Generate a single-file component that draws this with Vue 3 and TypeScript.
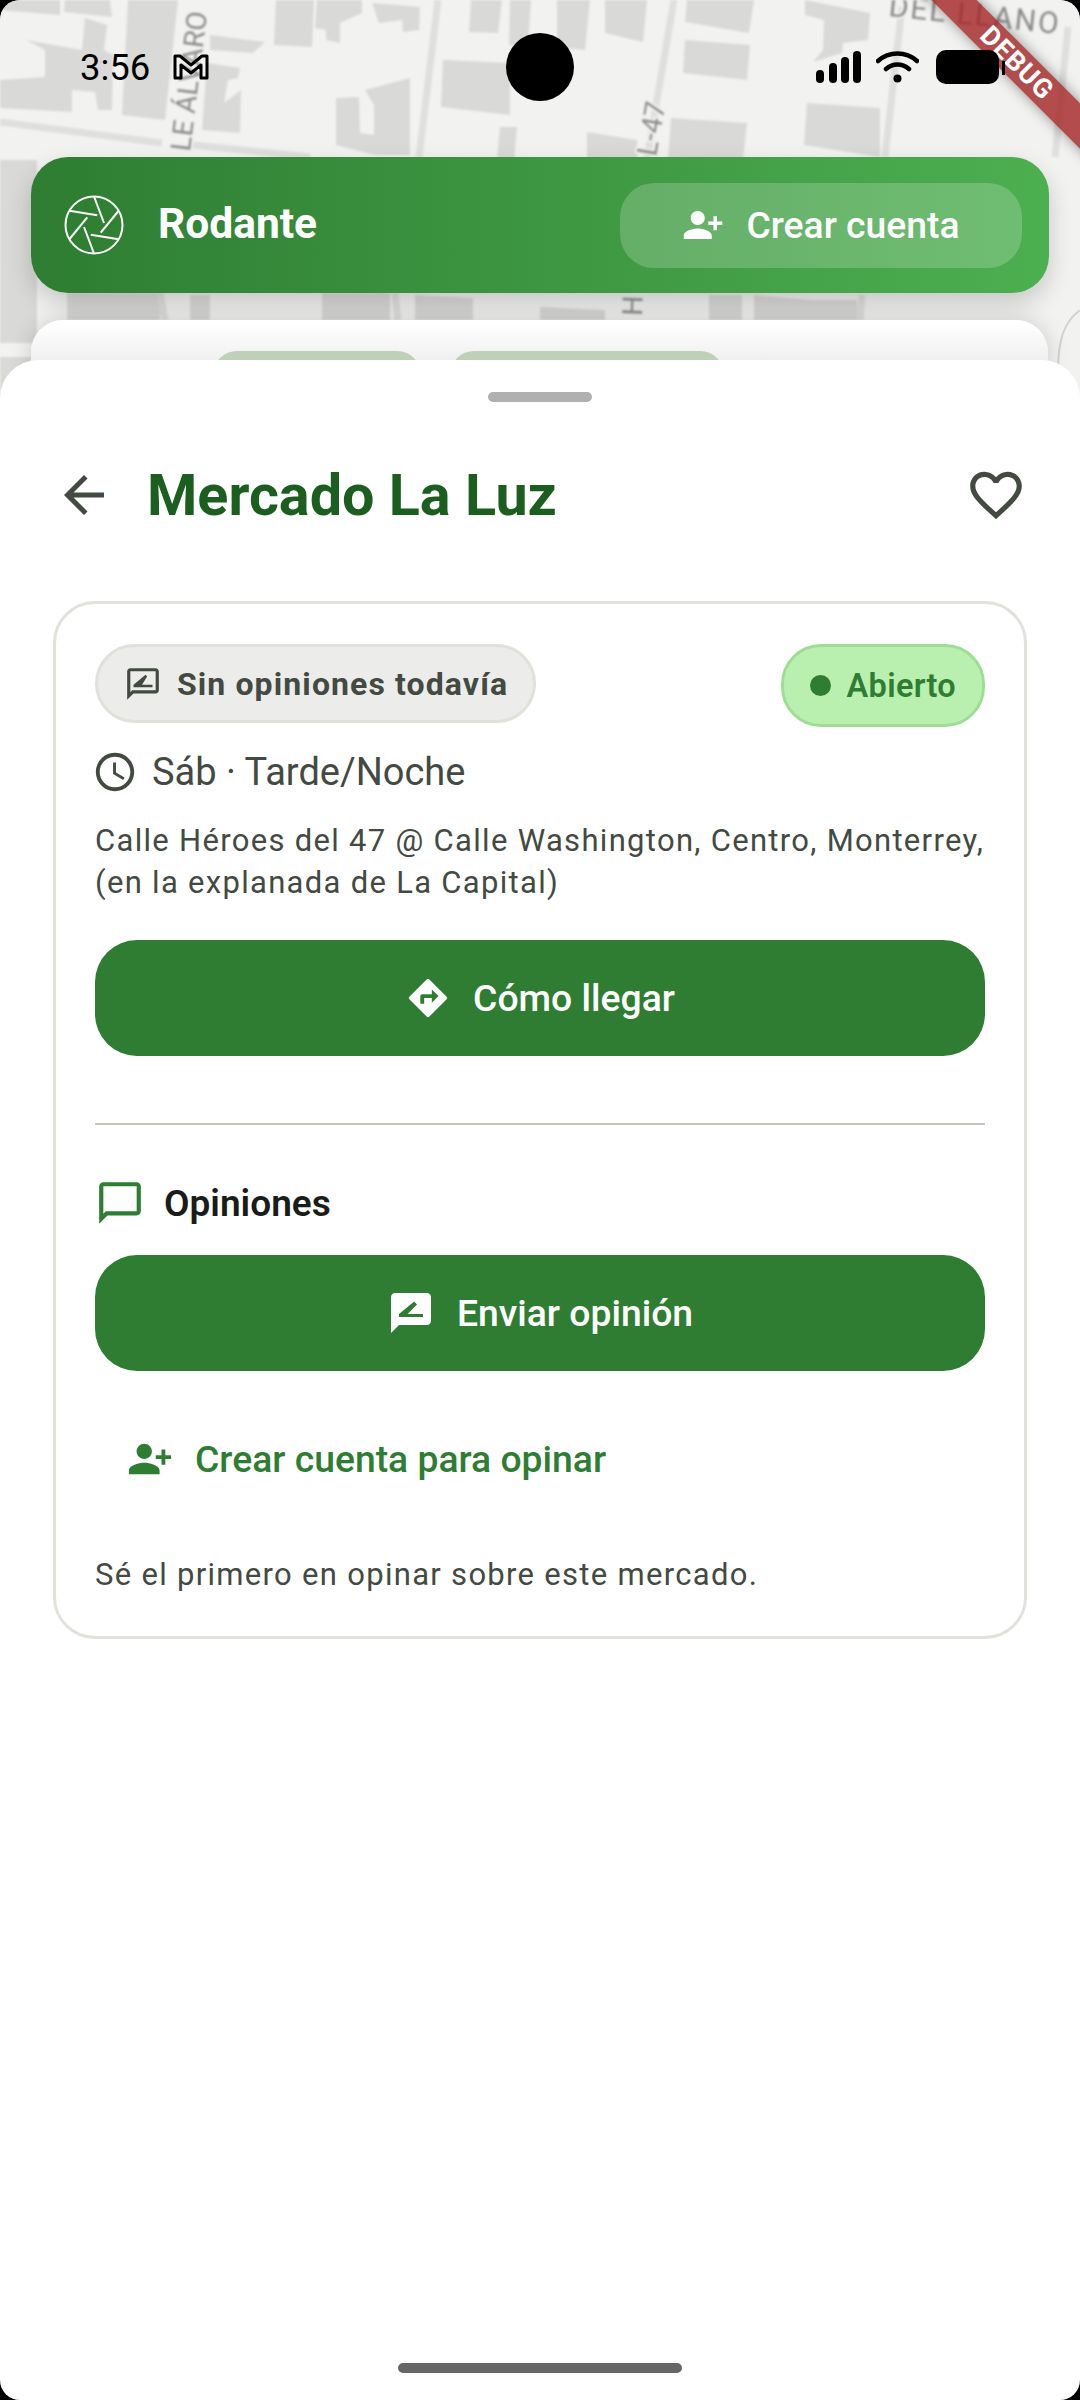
<script setup lang="ts">
const mapBlocks: string[] = [
  '0,0 60,0 60,15 0,10',
  '65,0 110,0 112,17 64,12',
  '0,80 45,77 45,50 26,40 82,50 85,18 107,25 104,50 113,55 112,110 98,110 95,92 72,90 72,112 0,108',
  '128,0 178,0 165,120 122,115',
  '210,35 265,42 253,53 210,50',
  '207,63 240,68 238,78 228,80 224,103 241,90 240,133 202,130',
  '276,0 314,0 312,47 274,45',
  '317,0 362,0 362,13 340,23 340,43 326,40 326,30 315,28',
  '372,3 420,7 419,30 403,32 402,20 379,23',
  '336,98 359,97 360,133 374,135 374,105 365,90 410,78 410,155 375,155 336,145',
  '443,60 510,63 510,115 441,107',
  '471,0 502,0 498,33 469,32',
  '510,0 531,0 528,47 509,45',
  '500,127 517,127 514,160 497,160',
  '557,0 590,0 585,50 557,47',
  '605,0 647,0 643,42 605,33',
  '687,0 754,0 749,33 685,22',
  '685,40 750,45 747,80 683,73',
  '671,118 747,123 743,160 668,160',
  '587,132 637,140 637,160 587,160',
  '805,0 870,13 868,40 843,43 842,53 813,62 823,50 824,20 805,15',
  '807,103 880,108 880,157 804,145',
  '0,160 37,160 37,343 0,343',
  '0,357 37,357 37,400 0,400',
  '67,293 160,293 160,320 67,320',
  '190,295 210,295 210,320 190,320',
  '322,293 390,293 390,320 322,320',
  '415,295 473,298 473,320 415,320',
  '540,307 605,310 605,320 540,320',
  '709,295 742,295 742,320 709,320',
  '754,295 812,300 857,300 857,320 754,320',
]

const apertureAngles: number[] = [0, 60, 120, 180, 240, 300]
</script>

<template>
  <div class="screen">
    <div class="map-layer">
      <svg class="map" width="1080" height="400" viewBox="0 0 1080 400">
        <rect width="1080" height="400" fill="#f2f2f1" />
        <polygon v-for="b in mapBlocks" :key="b" :points="b" fill="#d9dad7" />
        <path d="M0 122L162 143M193 145L310 157M438 0L419 157M674 0L640 200M902 7L885 157M1068 27L1055 157M160 293L165 320M395 293L398 320M862 295L860 320" stroke="#dfdfdd" stroke-width="7" fill="none" />
        <text class="map-label" transform="translate(190,152) rotate(-83)">LE ÁLVARO</text>
        <text class="map-label" transform="translate(656,157) rotate(-80)">L-47</text>
        <text class="map-label" transform="translate(642,316) rotate(-88)">H</text>
        <text class="map-label spaced" transform="translate(888,16) rotate(6)">DEL LLANO</text>
      </svg>
      <svg class="edge-arc" width="30" height="60" viewBox="0 0 30 60"><path d="M30 0C14 12 8 30 8 60" fill="none" stroke="#d2d3d0" stroke-width="2" /></svg>
    </div>

    <div class="debug"><span>DEBUG</span></div>

    <header class="status">
      <span class="time">3:56</span>
      <svg class="gmail" width="36" height="26" viewBox="0 0 36 26"><path d="M2 2H7L18 11L29 2H34V24H28V11L18 19L8 11V24H2Z" fill="none" stroke="#000" stroke-width="3" stroke-linejoin="round" /></svg>
      <span class="status-gap"></span>
      <svg width="45" height="32" viewBox="0 0 45 32"><g fill="#000"><rect x="0" y="19" width="8" height="13" rx="4" /><rect x="13" y="12" width="8" height="20" rx="4" /><rect x="25" y="6" width="8" height="26" rx="4" /><rect x="37" y="0" width="8" height="32" rx="4" /></g></svg>
      <svg class="wifi" width="43" height="32" viewBox="0 0 43 32"><path d="M2 10C13 0 30 0 41 10M10 18C17 12 26 12 33 18" fill="none" stroke="#000" stroke-width="4.5" stroke-linecap="round" /><circle cx="21.5" cy="27.5" r="4" fill="#000" /></svg>
      <span class="battery"></span>
    </header>

    <div class="topbar">
      <svg class="logo" width="60" height="60" viewBox="-30 -30 60 60" fill="none" stroke="#fff" stroke-width="2">
        <circle r="28.5" />
        <line v-for="a in apertureAngles" :key="a" x1="0" y1="-28.5" x2="10" y2="-2" :transform="`rotate(${a})`" />
      </svg>
      <span class="brand">Rodante</span>
      <span class="account-btn">
        <svg width="42" height="42" viewBox="0 0 24 24" fill="#fff"><path d="M15 12c2.21 0 4-1.79 4-4s-1.79-4-4-4-4 1.79-4 4 1.79 4 4 4zm-9-2V7H4v3H1v2h3v3h2v-3h3v-2H6zm9 4c-2.67 0-8 1.34-8 4v2h16v-2c0-2.66-5.33-4-8-4z" transform="matrix(-1 0 0 1 24 0)" /></svg>
        Crear cuenta
      </span>
    </div>

    <div class="back-card">
      <span class="back-chip first"></span>
      <span class="back-chip second"></span>
    </div>

    <main class="sheet">
      <div class="handle"></div>
      <div class="title-row">
        <svg class="back" width="60" height="60" viewBox="0 0 24 24" fill="#434a42"><path d="M20 11H7.83l5.59-5.59L12 4l-8 8 8 8 1.41-1.41L7.83 13H20v-2z" /></svg>
        <h1>Mercado La Luz</h1>
        <svg class="heart" width="62" height="62" viewBox="0 0 24 24" fill="#434a42"><path d="M16.5 3c-1.74 0-3.41.81-4.5 2.09C10.91 3.81 9.24 3 7.5 3 4.42 3 2 5.42 2 8.5c0 3.78 3.4 6.86 8.55 11.54L12 21.35l1.45-1.32C18.6 15.36 22 12.28 22 8.5 22 5.42 19.58 3 16.5 3zm-4.4 15.55l-.1.1-.1-.1C7.14 14.24 4 11.39 4 8.5 4 6.5 5.5 5 7.5 5c1.54 0 3.04.99 3.57 2.36h1.87C13.46 5.99 14.96 5 16.5 5c2 0 3.5 1.5 3.5 3.5 0 2.89-3.14 5.74-7.9 10.05z" /></svg>
      </div>

      <section class="card">
        <div class="pills">
          <span class="pill">
            <svg width="38" height="38" viewBox="0 0 24 24" fill="#434a42"><path d="M20 2H4c-1.1 0-2 .9-2 2v18l4-4h14c1.1 0 2-.9 2-2V4c0-1.1-.9-2-2-2zm0 14H5.17L4 17.17V4h16v12zM6 14h12v-1.5h-6.6L14.6 7.3l-1-1.1L6 12.5z" /></svg>
            Sin opiniones todavía
          </span>
          <span class="pill open"><i class="dot"></i>Abierto</span>
        </div>

        <div class="hours">
          <svg width="46" height="46" viewBox="0 0 24 24" fill="#434a42"><path d="M11.99 2C6.47 2 2 6.48 2 12s4.47 10 9.99 10C17.52 22 22 17.52 22 12S17.52 2 11.99 2zM12 20c-4.42 0-8-3.58-8-8s3.58-8 8-8 8 3.58 8 8-3.58 8-8 8zm.5-13H11v6l5.25 3.15.75-1.23-4.5-2.67z" /></svg>
          <span>Sáb · Tarde/Noche</span>
        </div>

        <p class="address">Calle Héroes del 47 @ Calle Washington, Centro, Monterrey,<br />(en la explanada de La Capital)</p>

        <button class="action">
          <svg width="46" height="46" viewBox="0 0 24 24" fill="#fff"><path d="M21.71 11.29l-9-9a.996.996 0 0 0-1.41 0l-9 9a.996.996 0 0 0 0 1.41l9 9c.39.39 1.02.39 1.41 0l9-9a.996.996 0 0 0 0-1.41zM14 14.5V12h-4v3H8v-4c0-.55.45-1 1-1h5V7.5l3.5 3.5-3.5 3.5z" /></svg>
          Cómo llegar
        </button>

        <hr />

        <div class="reviews-head">
          <svg width="50" height="50" viewBox="0 0 24 24" fill="#2e7d32"><path d="M20 2H4c-1.1 0-2 .9-2 2v18l4-4h14c1.1 0 2-.9 2-2V4c0-1.1-.9-2-2-2zm0 14H5.17L4 17.17V4h16v12z" /></svg>
          <span>Opiniones</span>
        </div>

        <button class="action">
          <svg width="48" height="48" viewBox="0 0 24 24" fill="#fff"><path d="M20 2H4c-1.1 0-2 .9-2 2v18l4-4h14c1.1 0 2-.9 2-2V4c0-1.1-.9-2-2-2zM6 14v-1.5l7.6-6.3 1.4 1.5-4.7 4.8H18V14H6z" /></svg>
          Enviar opinión
        </button>

        <div class="signup">
          <svg width="46" height="46" viewBox="0 0 24 24" fill="#2e7d32"><path d="M15 12c2.21 0 4-1.79 4-4s-1.79-4-4-4-4 1.79-4 4 1.79 4 4 4zm-9-2V7H4v3H1v2h3v3h2v-3h3v-2H6zm9 4c-2.67 0-8 1.34-8 4v2h16v-2c0-2.66-5.33-4-8-4z" transform="matrix(-1 0 0 1 24 0)" /></svg>
          Crear cuenta para opinar
        </div>

        <p class="first-note">Sé el primero en opinar sobre este mercado.</p>
      </section>

      <div class="home-bar"></div>
    </main>
  </div>
</template>

<style>
html, body {
  background: #000;
}
</style>

<style scoped>
.screen {
  position: relative;
  width: 1080px;
  height: 2400px;
  overflow: hidden;
  font-family: Roboto, sans-serif;
  background: #000;
}

.map-layer {
  position: absolute;
  inset: 0 0 auto 0;
  height: 400px;
  overflow: hidden;
  border-radius: 20px 20px 0 0;
  background: #f2f2f1;
}

.map {
  display: block;
  filter: blur(0.8px);
}

.map-label {
  font-family: Roboto, sans-serif;
  font-size: 28px;
  fill: #8c8c8c;
  stroke: #f2f2f1;
  stroke-width: 4px;
  paint-order: stroke;
}

.map-label.spaced {
  font-size: 30px;
  letter-spacing: 2px;
}

.edge-arc {
  position: absolute;
  right: 0;
  top: 310px;
}

.debug {
  position: absolute;
  top: 47px;
  left: 857px;
  width: 320px;
  height: 32px;
  background: rgba(165, 40, 40, 0.82);
  color: #fff;
  transform: rotate(45deg);
  display: flex;
  align-items: center;
  justify-content: center;
  font-size: 27px;
  font-weight: 700;
  box-shadow: 0 0 14px rgba(0, 0, 0, 0.4);
}

.debug span {
  letter-spacing: 1px;
}

.status {
  position: relative;
  height: 134px;
  padding: 0 81px 0 80px;
  display: flex;
  align-items: center;
  box-sizing: border-box;
}

.status::after {
  content: '';
  position: absolute;
  left: 506px;
  top: 33px;
  width: 68px;
  height: 68px;
  border-radius: 50%;
  background: #000;
}

.time {
  font-size: 36.5px;
  color: #000;
}

.gmail {
  margin-left: 23px;
}

.status-gap {
  flex: 1;
}

.wifi {
  margin-left: 15px;
}

.battery {
  position: relative;
  width: 63px;
  height: 34px;
  margin-left: 17px;
  border-radius: 10px;
  background: #000;
}

.battery::after {
  content: '';
  position: absolute;
  right: -6px;
  top: 11px;
  width: 3px;
  height: 14px;
  background: #000;
}

.topbar {
  position: relative;
  margin: 23px 31px 0 31px;
  height: 136px;
  padding: 0 27px 0 33px;
  box-sizing: border-box;
  display: flex;
  align-items: center;
  border-radius: 37px;
  background: linear-gradient(90deg, #2e7d32, #4caf50);
  box-shadow: 0 10px 24px rgba(0, 0, 0, 0.18);
  color: #fff;
}

.brand {
  margin: 0 0 3px 34px;
  font-size: 42.5px;
  font-weight: 700;
}

.account-btn {
  margin-left: auto;
  width: 402px;
  height: 85px;
  border-radius: 34px;
  background: rgba(255, 255, 255, 0.2);
  display: flex;
  align-items: center;
  justify-content: center;
  gap: 22px;
  font-size: 37.3px;
  font-weight: 500;
}

.back-card {
  position: absolute;
  left: 31px;
  top: 320px;
  width: 1017px;
  height: 80px;
  border-radius: 32px 32px 0 0;
  background: linear-gradient(180deg, #fff 5%, #e4e4e4 85%);
  box-shadow: 0 0 22px rgba(0, 0, 0, 0.16);
}

.back-chip {
  position: absolute;
  top: 31px;
  height: 40px;
  border-radius: 24px 24px 0 0;
  background: #bfd0b8;
}

.back-chip.first {
  left: 182px;
  width: 208px;
}

.back-chip.second {
  left: 419px;
  width: 274px;
}

.sheet {
  position: absolute;
  left: 0;
  right: 0;
  top: 360px;
  bottom: 0;
  padding: 32px 53px 0;
  border-radius: 38px 38px 20px 20px;
  background: #fff;
}

.handle {
  width: 104px;
  height: 10px;
  margin: 0 auto;
  border-radius: 5px;
  background: #b0b0b0;
}

.title-row {
  display: flex;
  align-items: center;
  height: 62px;
  margin-top: 62px;
}

.back {
  margin-left: 1px;
}

h1 {
  margin: 0 0 0 33px;
  font-size: 57.5px;
  font-weight: 700;
  color: #1b5e20;
}

.heart {
  margin-left: auto;
}

.card {
  margin-top: 75px;
  height: 1038px;
  box-sizing: border-box;
  padding: 40px 39px 0;
  border: 3px solid #e0e2dc;
  border-radius: 42px;
}

.pills {
  display: flex;
  justify-content: space-between;
  align-items: flex-start;
}

.pill {
  display: flex;
  align-items: center;
  gap: 15px;
  height: 79px;
  box-sizing: border-box;
  padding: 0 25px 0 26px;
  border: 3px solid #dfe1db;
  border-radius: 40px;
  background: #ecedea;
  color: #434a42;
  font-size: 32px;
  font-weight: 700;
  letter-spacing: 1.1px;
}

.pill.open {
  height: 83px;
  padding: 0 26px;
  gap: 16px;
  border-color: #a0dc98;
  background: #b9f0b0;
  color: #2e7d32;
  font-size: 32.5px;
  font-weight: 600;
  letter-spacing: 0.3px;
}

.dot {
  width: 21px;
  height: 21px;
  border-radius: 50%;
  background: #2e7d32;
}

.hours {
  display: flex;
  align-items: center;
  gap: 14px;
  margin: 22px 0 0 -3px;
  font-size: 38px;
  color: #434a42;
}

.address {
  margin: 25px 0 0;
  font-size: 31px;
  line-height: 42px;
  letter-spacing: 1.3px;
  color: #434a42;
  white-space: nowrap;
}

.action {
  width: 100%;
  height: 116px;
  display: flex;
  align-items: center;
  justify-content: center;
  gap: 22px;
  border: 0;
  border-radius: 42px;
  background: #2e7d32;
  color: #fff;
  font-family: inherit;
  font-size: 37.3px;
  font-weight: 500;
}

.address + .action {
  margin-top: 36px;
}

hr {
  margin: 67px 0 0;
  border: 0;
  border-top: 2px solid #c4c8bc;
}

.reviews-head {
  display: flex;
  align-items: center;
  gap: 19px;
  height: 60px;
  margin-top: 48px;
  font-size: 37px;
  font-weight: 600;
  color: #191c18;
}

.reviews-head + .action {
  margin-top: 22px;
}

.signup {
  display: flex;
  align-items: center;
  gap: 22px;
  height: 60px;
  margin: 58px 0 0 32px;
  font-size: 37.3px;
  font-weight: 500;
  color: #2e7d32;
}

.first-note {
  margin: 67px 0 0;
  font-size: 31px;
  letter-spacing: 1.3px;
  color: #434a42;
}

.home-bar {
  position: absolute;
  left: 398px;
  bottom: 27px;
  width: 284px;
  height: 10px;
  border-radius: 5px;
  background: #666;
}
</style>
